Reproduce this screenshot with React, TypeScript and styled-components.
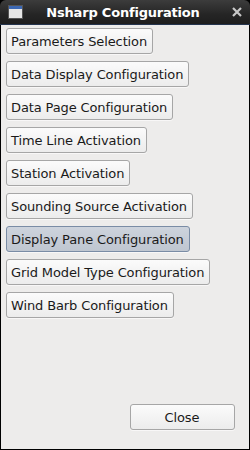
import styled, { createGlobalStyle } from 'styled-components';

const GlobalStyle = createGlobalStyle`
    html, body {
        margin: 0;
        padding: 0;
        background: #000;
    }
`;

const Window = styled.div`
    width: 250px;
    height: 450px;
    box-sizing: border-box;
    display: flex;
    flex-direction: column;
    font-family: 'DejaVu Sans', sans-serif;
    background: #000;
`;

const TitleBar = styled.div`
    height: 25px;
    flex: none;
    display: flex;
    align-items: center;
    padding: 0 8px;
    background: linear-gradient(#3c3c3c, #252525 60%, #1e1e1e);
    border-radius: 6px 6px 0 0;
    border-bottom: 1px solid #24344e;
    box-sizing: border-box;
`;

const TitleText = styled.div`
    flex: 1;
    text-align: center;
    color: #fff;
    font-weight: bold;
    font-size: 13px;
    letter-spacing: -0.2px;
    padding-right: 9px;
`;

const Body = styled.div`
    flex: 1;
    background: #edeceb;
    margin: 0 1px 1px 1px;
    display: flex;
    flex-direction: column;
    padding: 3px 5px 19px 5px;
`;

const ButtonList = styled.div`
    flex: 1;
    display: flex;
    flex-direction: column;
    align-items: flex-start;
    gap: 7px;
`;

const Button = styled.div<{ $active?: boolean }>`
    height: 26px;
    box-sizing: border-box;
    display: flex;
    align-items: center;
    justify-content: center;
    padding: 0 5px 0 4px;
    font-size: 13px;
    letter-spacing: -0.12px;
    color: #1a1a1a;
    border-radius: 3px;
    border: 1px solid ${(p) => (p.$active ? '#7a8ca5' : '#a6a6a6')};
    background: ${(p) =>
        p.$active
            ? 'linear-gradient(#cdd3dc, #bfc6d0)'
            : 'linear-gradient(#fbfbfb, #ececec)'};
    box-shadow: 0 1px 0 rgba(255, 255, 255, 0.6);
    white-space: nowrap;
`;

const Footer = styled.div`
    display: flex;
    justify-content: flex-end;
    padding-right: 9px;
`;

const CloseButton = styled(Button)`
    width: 105px;
`;

const WindowIcon = () => (
    <svg width="15" height="14" viewBox="0 0 15 14">
        <rect x="0.5" y="0.5" width="14" height="13" fill="#d8d8d8" stroke="#555" />
        <rect x="1" y="1" width="13" height="3" fill="#3c68b4" />
        <rect x="1" y="4" width="13" height="9" fill="#e6e6e6" />
    </svg>
);

const CloseIcon = () => (
    <svg width="10" height="10" viewBox="0 0 10 10">
        <path d="M1 1 L9 9 M9 1 L1 9" stroke="#c8c8c8" strokeWidth="2.2" />
    </svg>
);

const items = [
    'Parameters Selection',
    'Data Display Configuration',
    'Data Page Configuration',
    'Time Line Activation',
    'Station Activation',
    'Sounding Source Activation',
    'Display Pane Configuration',
    'Grid Model Type Configuration',
    'Wind Barb Configuration',
];

export default function App() {
    return (
        <Window>
            <GlobalStyle />
            <TitleBar>
                <WindowIcon />
                <TitleText>Nsharp Configuration</TitleText>
                <CloseIcon />
            </TitleBar>
            <Body>
                <ButtonList>
                    {items.map((label) => (
                        <Button key={label} $active={label === 'Display Pane Configuration'}>
                            {label}
                        </Button>
                    ))}
                </ButtonList>
                <Footer>
                    <CloseButton>Close</CloseButton>
                </Footer>
            </Body>
        </Window>
    );
}
